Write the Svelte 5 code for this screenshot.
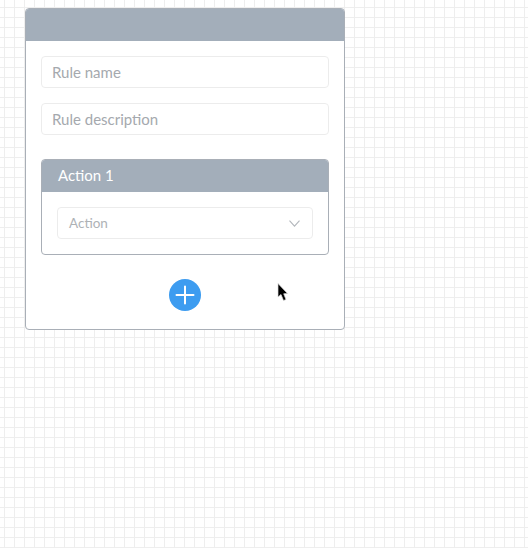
<script>
  const fields = ['Rule name', 'Rule description'];
</script>

<div class="canvas">
  <section class="card">
    <header class="card-head"></header>
    <div class="card-body">
      {#each fields as field}
        <div class="input">{field}</div>
      {/each}
      <div class="action">
        <div class="action-head">Action 1</div>
        <div class="action-body">
          <div class="select">
            <span>Action</span>
            <svg width="11" height="7" viewBox="0 0 11 7" fill="none" stroke="#b4b8bd" stroke-width="1.1">
              <path d="M0.5 0.6 L5.5 6.2 L10.5 0.6" />
            </svg>
          </div>
        </div>
      </div>
      <div class="add-row">
        <div class="add">
          <svg width="32" height="32" viewBox="0 0 32 32" stroke="#fff" stroke-width="2" stroke-linecap="round">
            <path d="M16 7.5 V24.5 M7.5 16 H24.5" />
          </svg>
        </div>
      </div>
    </div>
  </section>
  <svg class="cursor" width="12" height="19" viewBox="0 0 12 19">
    <path d="M1 0.5 L1 14 L4 11.5 L6.5 17.5 L9 16.5 L6.7 10.8 L10.5 10.5 Z" fill="#000" stroke="#ddd" stroke-width="0.7" />
  </svg>
</div>

<style>
  :global(body) {
    margin: 0;
  }
  .canvas {
    position: relative;
    box-sizing: border-box;
    width: 528px;
    height: 548px;
    padding: 8px 0 0 25px;
    background-color: #fff;
    background-image:
      linear-gradient(to right, #eeeeee 1px, transparent 1px),
      linear-gradient(to bottom, #eeeeee 1px, transparent 1px);
    background-size: 10px 10px;
    background-position: 4px 7px;
    font-family: "Lato", "Open Sans", sans-serif;
    overflow: hidden;
  }
  .card {
    box-sizing: border-box;
    width: 320px;
    height: 322px;
    background: #fff;
    border: 1px solid #a9afb7;
    border-radius: 4px;
    overflow: hidden;
  }
  .card-head {
    height: 32px;
    background: #a3aeba;
  }
  .card-body {
    display: flex;
    flex-direction: column;
    padding: 15px 15px 0;
  }
  .input {
    box-sizing: border-box;
    height: 32px;
    margin-bottom: 15px;
    padding: 0 10px;
    border: 1px solid #ececec;
    border-radius: 4px;
    color: #a5a9ae;
    font-size: 15px;
    line-height: 31px;
  }
  .action {
    box-sizing: border-box;
    height: 96px;
    margin-top: 9px;
    border: 1px solid #a9afb7;
    border-radius: 4px;
    overflow: hidden;
  }
  .action-head {
    height: 32px;
    padding-left: 16px;
    background: #a3aeba;
    color: #fff;
    font-size: 15px;
    line-height: 31px;
  }
  .action-body {
    padding: 15px;
  }
  .select {
    box-sizing: border-box;
    display: flex;
    align-items: center;
    justify-content: space-between;
    height: 32px;
    padding: 0 12px 0 11px;
    border: 1px solid #ececec;
    border-radius: 4px;
    color: #aeb2b6;
    font-size: 13.5px;
  }
  .add-row {
    display: flex;
    justify-content: center;
    margin-top: 24px;
  }
  .add {
    width: 32px;
    height: 32px;
    border-radius: 50%;
    background: #3d9cf0;
  }
  .add svg {
    display: block;
  }
  .cursor {
    position: absolute;
    left: 277px;
    top: 283px;
  }
</style>
